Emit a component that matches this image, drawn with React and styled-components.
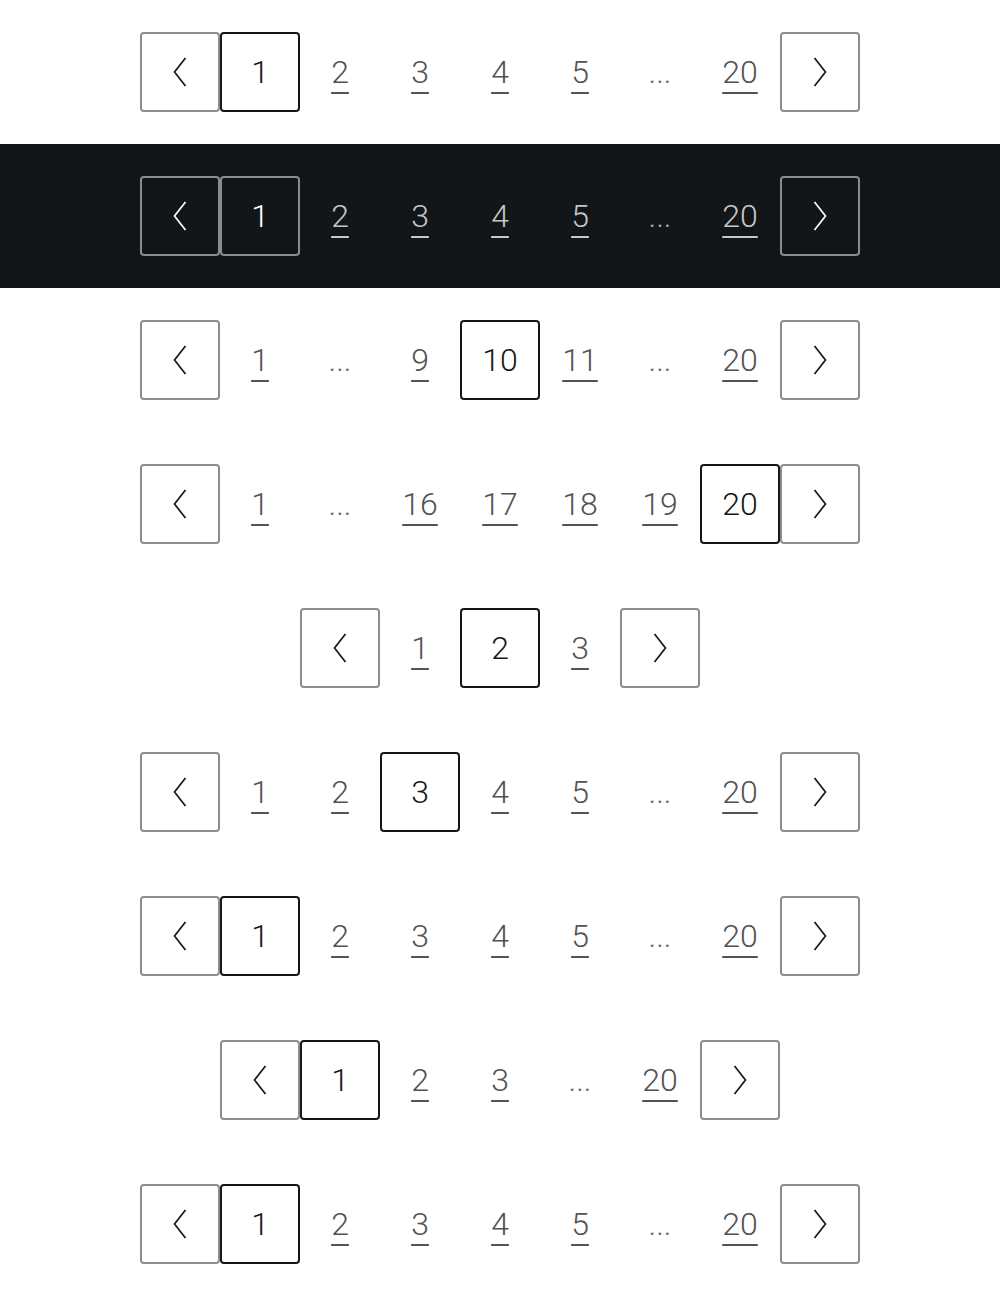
import React from "react";
import styled, { createGlobalStyle, css } from "styled-components";

const GlobalStyle = createGlobalStyle`
  html, body { margin: 0; padding: 0; background: #ffffff; }
  body { font-family: Roboto, "Liberation Sans", Arial, sans-serif; }
  * { box-sizing: border-box; }
`;

const Section = styled.section`
  display: flex;
  justify-content: center;
  padding: 32px 0;
  background: ${(p) => (p.$dark ? "#121619" : "#ffffff")};
`;

const Nav = styled.nav`
  display: flex;
`;

const List = styled.ul`
  display: flex;
  list-style: none;
  margin: 0;
  padding: 0;
`;

const Item = styled.li`
  width: 80px;
  height: 80px;
  display: flex;
  align-items: center;
  justify-content: center;
`;

const boxStyles = css`
  width: 80px;
  height: 80px;
  display: flex;
  align-items: center;
  justify-content: center;
  border-radius: 4px;
  border: 2px solid #8d8d8d;
  background: transparent;
`;

const ArrowButton = styled.button`
  ${boxStyles}
  padding: 0 0 0 0;
  cursor: pointer;
  color: ${(p) => (p.$dark ? "#ffffff" : "#161616")};
`;

const textStyles = css`
  font-size: 32px;
  font-weight: 300;
  line-height: 1;
  padding-bottom: 1px;
`;

const Current = styled.span`
  ${boxStyles}
  ${textStyles}
  border-color: ${(p) => (p.$dark ? "#8d8d8d" : "#161616")};
  color: ${(p) => (p.$dark ? "#ffffff" : "#161616")};
`;

const PageLink = styled.a`
  ${textStyles}
  color: ${(p) => (p.$dark ? "#c6c6c6" : "#525252")};
  text-decoration: underline;
  text-decoration-thickness: 2px;
  text-underline-offset: 9px;
`;

const Ellipsis = styled.span`
  ${textStyles}
  color: ${(p) => (p.$dark ? "#a8a8a8" : "#6f6f6f")};
`;

const Chevron = ({ dir }) => (
  <svg width="14" height="30" viewBox="0 0 14 30" aria-hidden="true">
    <polyline
      points={dir === "left" ? "12.5,1 1.5,15 12.5,29" : "1.5,1 12.5,15 1.5,29"}
      fill="none"
      stroke="currentColor"
      strokeWidth="1.7"
    />
  </svg>
);

const Pagination = ({ items, current, dark }) => (
  <Section $dark={dark}>
    <Nav aria-label="Pagination">
      <List>
        <Item>
          <ArrowButton $dark={dark} aria-label="Previous">
            <Chevron dir="left" />
          </ArrowButton>
        </Item>
        {items.map((it, i) => (
          <Item key={i}>
            {it === "..." ? (
              <Ellipsis $dark={dark}>...</Ellipsis>
            ) : it === current ? (
              <Current $dark={dark} aria-current="page">{it}</Current>
            ) : (
              <PageLink $dark={dark} href="#">{it}</PageLink>
            )}
          </Item>
        ))}
        <Item>
          <ArrowButton $dark={dark} aria-label="Next">
            <Chevron dir="right" />
          </ArrowButton>
        </Item>
      </List>
    </Nav>
  </Section>
);

const rows = [
  { items: [1, 2, 3, 4, 5, "...", 20], current: 1 },
  { items: [1, 2, 3, 4, 5, "...", 20], current: 1, dark: true },
  { items: [1, "...", 9, 10, 11, "...", 20], current: 10 },
  { items: [1, "...", 16, 17, 18, 19, 20], current: 20 },
  { items: [1, 2, 3], current: 2 },
  { items: [1, 2, 3, 4, 5, "...", 20], current: 3 },
  { items: [1, 2, 3, 4, 5, "...", 20], current: 1 },
  { items: [1, 2, 3, "...", 20], current: 1 },
  { items: [1, 2, 3, 4, 5, "...", 20], current: 1 },
];

export default function App() {
  return (
    <>
      <GlobalStyle />
      {rows.map((r, i) => (
        <Pagination key={i} items={r.items} current={r.current} dark={r.dark} />
      ))}
    </>
  );
}
